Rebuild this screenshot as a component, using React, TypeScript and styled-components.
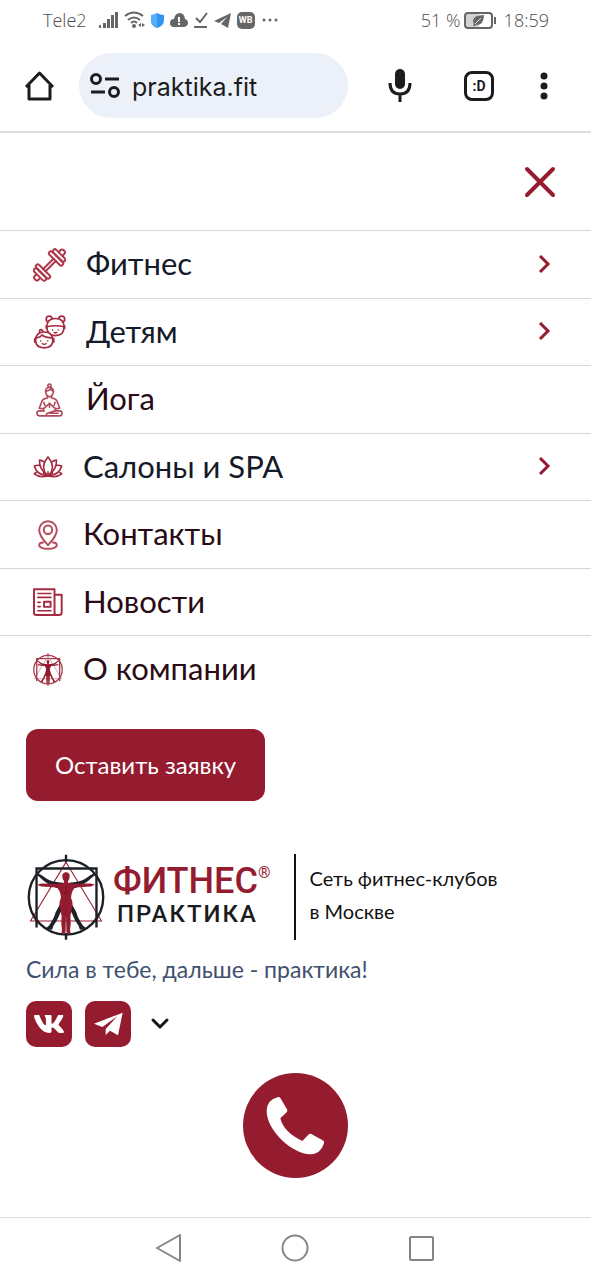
import React from "react";
import styled, { createGlobalStyle } from "styled-components";
import { FaVk } from "react-icons/fa";

const RED = "#951b2f";
const INK = "#1c1c20";
const STATUS = "#666666";
const LINE = "#dedede";

const GlobalStyle = createGlobalStyle`
  *, *::before, *::after { box-sizing: border-box; }
  body { margin: 0; background: #fff; font-family: Lato, "Noto Sans", sans-serif; }
  button, input { font: inherit; color: inherit; }
  button { display: inline-flex; align-items: center; justify-content: center; padding: 0; border: 0; background: none; cursor: pointer; }
  a { color: inherit; text-decoration: none; }
  svg { display: block; flex: none; }
`;

const Page = styled.div`
  display: flex;
  flex-direction: column;
  min-height: 100vh;
`;

const StatusBar = styled.div`
  display: flex;
  align-items: center;
  justify-content: space-between;
  height: 40px;
  padding: 0 42px 0 43px;
  color: #4c4c4c;
  font: 300 18px/24px "Open Sans", sans-serif;
`;

const StatusGroup = styled.div<{ $gap: number }>`
  display: flex;
  align-items: center;
  gap: ${(p) => p.$gap}px;
`;

const Carrier = styled.span`
  margin-right: 6px;
`;

const Clock = styled.time`
  margin-left: 4px;
`;

const Toolbar = styled.header`
  display: flex;
  align-items: center;
  height: 93px;
  padding: 0 39px 0 24px;
  border-bottom: 2px solid ${LINE};
  color: ${INK};
`;

const AddressBar = styled.form`
  display: flex;
  flex: 1;
  align-items: center;
  gap: 11px;
  min-width: 0;
  height: 65px;
  margin: 0 36px 0 24px;
  padding: 0 20px 0 11px;
  border-radius: 33px;
  background: #ebf0f9;
`;

const AddressInput = styled.input`
  flex: 1;
  min-width: 0;
  padding: 3px 0 0;
  border: 0;
  outline: 0;
  background: none;
  font: 400 25px/32px Inter, sans-serif;
`;

const ToolbarActions = styled.div`
  display: flex;
  align-items: center;
`;

const ToolbarButton = styled.button<{ $before?: number }>`
  margin-left: ${(p) => p.$before ?? 0}px;
`;

const TabCount = styled.span`
  display: flex;
  align-items: center;
  justify-content: center;
  width: 30px;
  height: 30px;
  border: 3px solid ${INK};
  border-radius: 8px;
  font: 700 14px/16px Roboto, sans-serif;
`;

const CloseRow = styled.div`
  display: flex;
  align-items: center;
  justify-content: flex-end;
  height: 97px;
  padding-right: 35px;
`;

const MenuList = styled.ul`
  margin: 0;
  padding: 0;
  list-style: none;
`;

const MenuItem = styled.li`
  height: 68px;
  border-top: 1px solid #d6d6d6;
  &:nth-child(even) { height: 67px; }
`;

const MenuEntry = styled.a<{ $submenu?: boolean }>`
  display: flex;
  align-items: center;
  gap: 20px;
  width: 100%;
  height: 100%;
  padding: 0 40px 0 33px;
  color: ${(p) => (p.$submenu ? "#141a28" : "#2a0a14")};
  font-size: 31px;
  line-height: 40px;
`;

const MenuLabel = styled.span`
  flex: 1;
  padding-bottom: 3px;
  text-align: left;
`;

const Footer = styled.footer`
  display: flex;
  flex: 1;
  flex-direction: column;
  align-items: flex-start;
  padding: 26px 26px 38px;
`;

const RequestButton = styled.button`
  height: 72px;
  padding: 0 29px 2px;
  border-radius: 12px;
  background: ${RED};
  color: #fff;
  font-size: 24px;
`;

const Brand = styled.div`
  display: flex;
  align-items: center;
  height: 86px;
  margin-top: 53px;
`;

const BrandLink = styled.a`
  display: flex;
  align-items: center;
  gap: 7px;
  padding-right: 24px;
`;

const BrandText = styled.span`
  padding-bottom: 2px;
`;

const BrandName = styled.span`
  display: flex;
  align-items: flex-start;
  color: ${RED};
  font: 500 36px/36px Roboto, sans-serif;
`;

const Registered = styled.sup`
  font: 400 16px/20px Roboto, sans-serif;
`;

const BrandSub = styled.span`
  display: block;
  padding-left: 4px;
  color: ${INK};
  font: 500 24px/30px Roboto, sans-serif;
  letter-spacing: 2px;
`;

const BrandNote = styled.p`
  margin: 0;
  height: 86px;
  padding: 8px 0 0 13px;
  border-left: 2px solid #111;
  color: #111;
  font-size: 20px;
  line-height: 33px;
`;

const Slogan = styled.p`
  margin: 13px 0 0;
  color: #40506e;
  font-size: 23px;
  line-height: 32px;
`;

const Socials = styled.div`
  display: flex;
  align-items: center;
  gap: 13px;
  margin-top: 16px;
`;

const SocialLink = styled.a`
  display: flex;
  align-items: center;
  justify-content: center;
  width: 46px;
  height: 46px;
  border-radius: 10px;
  background: ${RED};
  color: #fff;
`;

const MoreButton = styled.button`
  margin-left: 6px;
`;

const CallLink = styled.a`
  align-self: center;
  margin-top: 26px;
  border-radius: 50%;
  background: ${RED};
`;

const SystemNav = styled.nav`
  display: flex;
  align-items: center;
  justify-content: center;
  gap: 98px;
  height: 63px;
  padding: 0 2px 2px 0;
  border-top: 1px solid #dcdcdc;
`;

const line = {
  fill: "none",
  stroke: "#a52b41",
  strokeWidth: 6,
  strokeLinecap: "round" as const,
  strokeLinejoin: "round" as const,
};

const DumbbellIcon = () => (
  <svg width="33" height="34" viewBox="38 37 100 102" {...line} strokeWidth="6" stroke="#b0384d">
    <g transform="translate(88 88) rotate(-45)">
      <path d="M-22-5H22M-22 5H22" />
      {[1, -1].map((s) => (
        <g key={s} transform={`scale(${s} 1)`}>
          <rect x="22" y="-28" width="12" height="56" rx="6" />
          <rect x="35" y="-24" width="12" height="48" rx="6" />
          <path d="M49-8h7q6 0 6 8t-6 8h-7" />
        </g>
      ))}
    </g>
  </svg>
);

const KidsIcon = () => (
  <svg width="33" height="34" viewBox="38 241 100 102" {...line} strokeWidth="5">
    <circle cx="87" cy="253" r="9" />
    <circle cx="125" cy="253" r="9" />
    <path d="M80 277q0-26 26-26t26 26q0 26-26 26t-26-26z" fill="#fff" />
    <path d="M79 276q27-6 54 0M78 273v8M134 273v8" />
    <path d="M97 286h1M114 286h1M102 293q4 4 8 0" strokeWidth="4" />
    <path d="M59 296q-4-10 3-11 5 0 7 9" />
    <path d="M46 318q0-26 26-26t26 26q0 22-26 22t-26-22z" fill="#fff" />
    <path d="M47 310q14-1 18-9 10 9 33 9M43 313v10M101 313v10" />
    <path d="M61 319h1M82 319h1M66 327q6 5 12 0" strokeWidth="4" />
  </svg>
);

const YogaIcon = () => (
  <svg width="33" height="34" viewBox="38 37 100 102" {...line} strokeWidth="5" stroke="#b04a5b">
    <circle cx="88" cy="45" r="5" />
    <path d="M76 63q0-13 12-13t12 13q-3 15-12 15t-12-15zM78 61q10-1 13-6 3 5 8 6" />
    <path d="M82 77v5q-16 2-18 13l-7 18q10 3 17-2l14-13 14 13q7 5 17 2l-7-18q-2-11-18-13v-5" />
    <path d="M88 98v12M71 95l3 9M105 95l-3 9M70 114v6M106 114v6" />
    <path d="M72 121H58q-8 0-8 7t8 8h60q8 0 8-8t-8-7h-14l-24 8q-5 7 4 7M88 128h26" />
  </svg>
);

const LotusIcon = () => (
  <svg width="30" height="24" viewBox="37 256 92 70" {...line} strokeWidth="5">
    <path d="M83 260q-16 20-13 36 3 16 13 22 10-6 13-22 3-16-13-36z" />
    <path d="M72 276q-9-6-15-6-2 28 26 48M94 276q9-6 15-6 2 28-26 48" />
    <path d="M57 286q-10-1-16 2 8 29 42 30M109 286q10-1 16 2-8 29-42 30" />
    <path d="M49 307q-5 1-8 5 18 14 42 6 24 8 42-6-3-4-8-5" />
    <path d="M69 310l14 9 14-9M83 306v14" />
  </svg>
);

const PinIcon = () => (
  <svg width="30" height="30" viewBox="37 43 92 90" {...line} stroke="#b5495b">
    <path d="M83 119Q56 92 56 73a27 27 0 0 1 54 0q0 19-27 46z" />
    <circle cx="83" cy="72" r="13" />
    <path d="M68 111q-13 1-12 9 3 10 27 10t27-10q1-8-12-9" />
  </svg>
);

const NewsIcon = () => (
  <svg width="30" height="30" viewBox="37 247 92 88" {...line}>
    <path d="M40 252h63v72q0 7 7 7H47q-7 0-7-7zM103 269h22v54q0 8-8 8h-7q-7 0-7-8" />
    <path d="M52 265h40M52 277h40M52 292h7M52 305h7M52 318h40" strokeWidth="5" />
    <rect x="71" y="290" width="20" height="16" />
  </svg>
);

type VitruvianProps = { width: number; height: number; frame: string; limbs: string; stroke: number };

const Vitruvian = ({ width, height, frame, limbs, stroke }: VitruvianProps) => (
  <svg width={width} height={height} viewBox="24 27 232 254" fill="none">
    <path d="M140 51L35 225H245Z" stroke={RED} strokeWidth="3" />
    <circle cx="140" cy="155" r="110" stroke={frame} strokeWidth={stroke} />
    <path d="M53 244V70H230V244" stroke={frame} strokeWidth={stroke} />
    <path d="M140 29v22M140 260v20" stroke={frame} strokeWidth={stroke} />
    {["", "translate(280 0) scale(-1 1)"].map((side) => (
      <g key={side} transform={side || undefined}>
        <path
          fill={limbs}
          d="M148 112q33-2 50-13 12-10 27-16l3 5q-12 7-22 18-16 14-40 22zM154 168q8 16 17 32 3 16 19 38l10 9-19 4q-2-12-13-26-8-16-10-22l-14-24z"
        />
        <path
          fill={RED}
          d="M139 81q12 0 12 12 0 8-5 14v5l17 3 50-1 13 4-13 5-47 3-7 11q-4 11-4 20 6 11 4 25l-6 28 1 22-2 18 1 10q-7 5-11 0l-1-36-2-34z"
        />
      </g>
    ))}
    <path d="M140 122v26M130 138q7 6 10 1 3 5 10-1M140 196v60" stroke="#6d0f20" strokeWidth="2" />
  </svg>
);

const ChevronRight = () => (
  <svg width="14" height="20" viewBox="0 0 14 20" fill="none" stroke={RED} strokeWidth="3">
    <path d="M3 1l8 8-8 8" />
  </svg>
);

const menu = [
  { label: "Фитнес", icon: <DumbbellIcon />, submenu: true },
  { label: "Детям", icon: <KidsIcon />, submenu: true },
  { label: "Йога", icon: <YogaIcon /> },
  { label: "Салоны и SPA", icon: <LotusIcon />, submenu: true },
  { label: "Контакты", icon: <PinIcon /> },
  { label: "Новости", icon: <NewsIcon /> },
  { label: "О компании", icon: <Vitruvian width={30} height={33} frame="#a83a4c" limbs={RED} stroke={10} /> },
];

const SignalIcons = () => (
  <>
    <svg width="19" height="18" viewBox="0 0 19 18" fill={STATUS}>
      <path d="M0 14h2v3H0zM4 12h3v5H4zM8 8h3v9H8zM12 4h3v13h-3zM16 1h3v16h-3z" />
    </svg>
    <svg width="21" height="18" viewBox="0 0 21 18" fill="none" stroke={STATUS} strokeWidth="2">
      <path d="M1 5q9-7 18 0M4 9q6-5 12 0M7 12q3-3 6 0" />
      <circle cx="10" cy="15" r="1" fill={STATUS} />
      <path d="M17 12v4l-3-2zM18 12v4l3-2z" fill={STATUS} stroke="none" />
    </svg>
    <svg width="13" height="15" viewBox="0 0 13 15">
      <path d="M6 0q3 2 7 2v5q0 6-7 8-6-2-6-8V2q4 0 6-2z" fill="#2f94f2" />
      <path d="M6 0v15q-6-2-6-8V2q4 0 6-2z" fill="#56adf8" />
    </svg>
    <svg width="18" height="14" viewBox="0 0 18 14">
      <path d="M4 14a4 4 0 0 1 0-8q1-6 6-6 4 0 5 6 3 1 3 4t-4 4z" fill={STATUS} />
      <path d="M9 4v5M9 10v2" stroke="#fff" strokeWidth="2" />
    </svg>
    <svg width="14" height="16" viewBox="0 0 14 16" fill="none" stroke={STATUS} strokeWidth="2">
      <path d="M2 6l4 4 7-9M0 15h13" />
    </svg>
    <svg width="17" height="15" viewBox="0 0 17 15" fill={STATUS}>
      <path d="M17 0L0 8l5 2 8-6-6 7 7 4z" />
    </svg>
  </>
);

const AppBadge = styled.span`
  display: flex;
  align-items: center;
  justify-content: center;
  width: 18px;
  height: 17px;
  border-radius: 5px;
  background: ${STATUS};
  color: #fff;
  font: 700 9px/10px Roboto, sans-serif;
`;

export default function App() {
  return (
    <Page>
      <GlobalStyle />
      <StatusBar>
        <StatusGroup $gap={6}>
          <Carrier>Tele2</Carrier>
          <SignalIcons />
          <AppBadge>WB</AppBadge>
          <svg width="18" height="4" viewBox="0 0 18 4" fill={STATUS}>
            <circle cx="3" cy="2" r="1.5" />
            <circle cx="9" cy="2" r="1.5" />
            <circle cx="15" cy="2" r="1.5" />
          </svg>
        </StatusGroup>
        <StatusGroup $gap={3}>
          <span>51 %</span>
          <svg width="33" height="17" viewBox="0 0 33 17">
            <rect x="2" y="2" width="13" height="13" fill="#d2d2d2" />
            <rect x="1" y="1" width="27" height="15" rx="3" fill="none" stroke={STATUS} strokeWidth="2" />
            <path d="M31 5v7" stroke={STATUS} strokeWidth="2" />
            <path d="M20 3q-11 0-11 6 0 2 1 3l-1 2h2l1-1q8 0 8-10z" fill={STATUS} />
            <path d="M11 12l6-6" stroke="#ddd" strokeWidth="1" />
          </svg>
          <Clock>18:59</Clock>
        </StatusGroup>
      </StatusBar>

      <Toolbar>
        <button aria-label="Домой">
          <svg width="31" height="32" viewBox="0 0 31 32" fill="none" stroke={INK} strokeWidth="3" strokeLinejoin="round">
            <path d="M2 17L15.500 3 29 17M5 15v14h21V15" />
          </svg>
        </button>
        <AddressBar>
          <button type="button" aria-label="Сведения о сайте">
            <svg width="31" height="26" viewBox="0 0 31 26" fill="none" stroke={INK} strokeWidth="3">
              <circle cx="6" cy="6" r="4.500" />
              <path d="M15 6h14M1 19h14" />
              <circle cx="24" cy="19" r="4.500" />
            </svg>
          </button>
          <AddressInput aria-label="Адрес" defaultValue="praktika.fit" />
        </AddressBar>
        <ToolbarActions>
          <ToolbarButton aria-label="Голосовой поиск">
            <svg width="32" height="34" viewBox="0 0 32 34" fill="none" stroke={INK} strokeWidth="3">
              <rect x="11" y="0" width="10" height="20" rx="5" fill={INK} stroke="none" />
              <path d="M6 14q0 11 10 11t10-11M16 25v8" />
            </svg>
          </ToolbarButton>
          <ToolbarButton aria-label="Вкладки" $before={48}>
            <TabCount>:D</TabCount>
          </ToolbarButton>
          <ToolbarButton aria-label="Меню браузера" $before={42}>
            <svg width="16" height="28" viewBox="0 0 16 28" fill={INK}>
              <circle cx="8" cy="4" r="3.500" />
              <circle cx="8" cy="14" r="3.500" />
              <circle cx="8" cy="24" r="3.500" />
            </svg>
          </ToolbarButton>
        </ToolbarActions>
      </Toolbar>

      <CloseRow>
        <button aria-label="Закрыть меню">
          <svg width="32" height="32" viewBox="0 0 32 32" stroke={RED} strokeWidth="4" strokeLinecap="round">
            <path d="M3 3l26 26M29 3L3 29" />
          </svg>
        </button>
      </CloseRow>

      <nav aria-label="Главное меню">
        <MenuList>
          {menu.map(({ label, icon, submenu }) => (
            <MenuItem key={label}>
              {submenu ? (
                <MenuEntry as="button" $submenu>
                  {icon}
                  <MenuLabel>{label}</MenuLabel>
                  <ChevronRight />
                </MenuEntry>
              ) : (
                <MenuEntry href="#">
                  {icon}
                  <MenuLabel>{label}</MenuLabel>
                </MenuEntry>
              )}
            </MenuItem>
          ))}
        </MenuList>
      </nav>

      <Footer>
        <RequestButton>Оставить заявку</RequestButton>
        <Brand>
          <BrandLink href="#">
            <Vitruvian width={80} height={86} frame="#1d2027" limbs="#1d2027" stroke={7} />
            <BrandText>
              <BrandName>
                ФИТНЕС<Registered>®</Registered>
              </BrandName>
              <BrandSub>ПРАКТИКА</BrandSub>
            </BrandText>
          </BrandLink>
          <BrandNote>
            Сеть фитнес-клубов
            <br />в Москве
          </BrandNote>
        </Brand>
        <Slogan>Сила в тебе, дальше - практика!</Slogan>
        <Socials>
          <SocialLink href="#" aria-label="ВКонтакте">
            <FaVk size={32} />
          </SocialLink>
          <SocialLink href="#" aria-label="Telegram">
            <svg width="46" height="46" viewBox="211 153 138 138" fill="#fff">
              <path d="M324 188L238 221l25 10 45-32-35 38v18l13-13 24 14z" />
            </svg>
          </SocialLink>
          <MoreButton aria-label="Ещё">
            <svg width="20" height="14" viewBox="0 0 20 14" fill="none" stroke="#15151c" strokeWidth="3" strokeLinecap="round" strokeLinejoin="round">
              <path d="M3 3l7 7 7-7" />
            </svg>
          </MoreButton>
        </Socials>
        <CallLink href="#" aria-label="Позвонить">
          <svg width="105" height="105" viewBox="309 24 315 315" fill="#fff">
            <path d="M412 97q6-3 9 2l20 34q3 5-1 9l-19 18q10 42 66 68l18-19q4-4 9-2l34 19q6 3 4 9-10 33-42 33c-50 0-130-70-130-130q0-32 32-41z" />
          </svg>
        </CallLink>
      </Footer>

      <SystemNav aria-label="Системная навигация">
        <button aria-label="Назад">
          <svg width="28" height="28" viewBox="0 0 28 28" fill="none" stroke="#858585" strokeWidth="2" strokeLinejoin="round">
            <path d="M2 14L25 1V27Z" />
          </svg>
        </button>
        <button aria-label="Главный экран">
          <svg width="28" height="28" viewBox="0 0 28 28" fill="none" stroke="#858585" strokeWidth="2">
            <circle cx="14" cy="14" r="12.500" />
          </svg>
        </button>
        <button aria-label="Недавние приложения">
          <svg width="28" height="28" viewBox="0 0 28 28" fill="none" stroke="#858585" strokeWidth="2">
            <rect x="3" y="3" width="23" height="23" rx="1" />
          </svg>
        </button>
      </SystemNav>
    </Page>
  );
}
